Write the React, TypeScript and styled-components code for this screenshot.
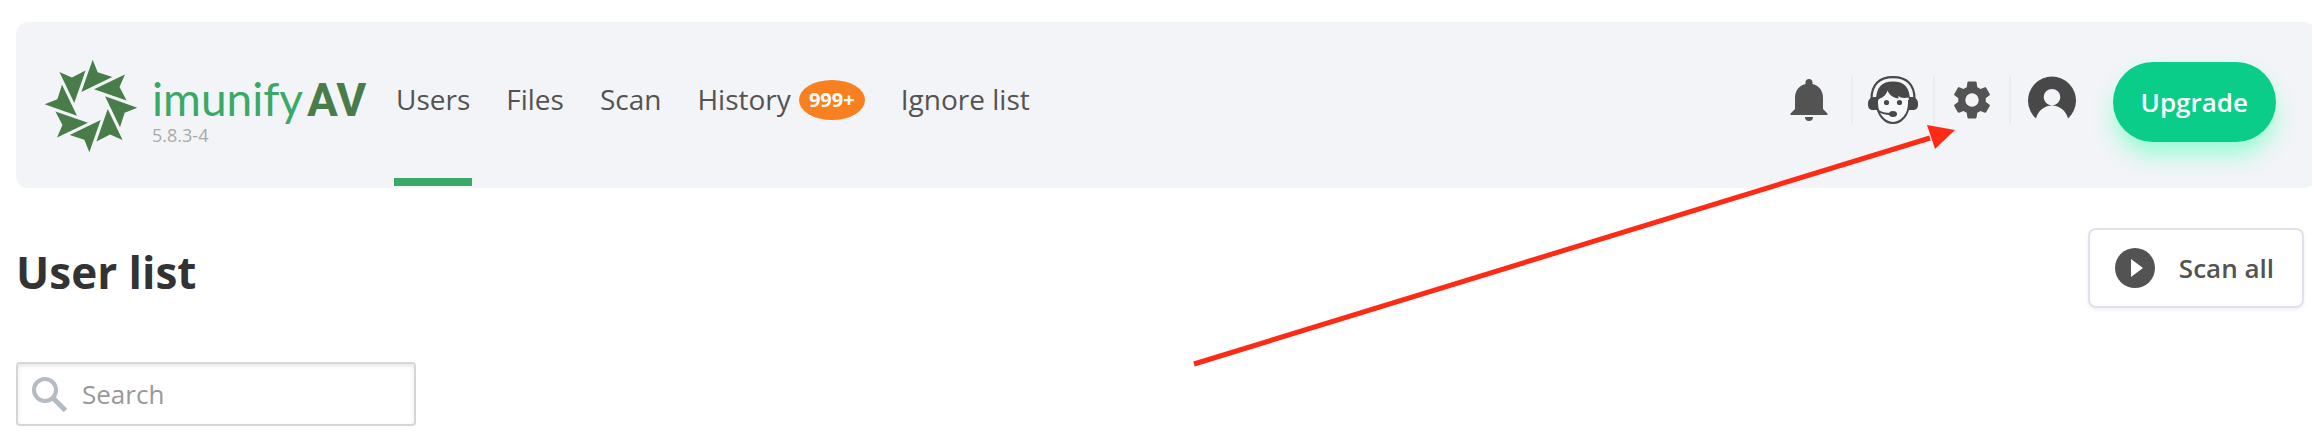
import React from "react";
import styled, { createGlobalStyle } from "styled-components";

const GlobalStyle = createGlobalStyle`
  *, *::before, *::after { box-sizing: border-box; }
  body {
    margin: 0;
    background: #fff;
    color: #535353;
    font-family: "Open Sans", sans-serif;
    font-size: 28px;
    overflow-x: hidden;
  }
  button, input { font: inherit; color: inherit; }
`;

const Page = styled.div`
  position: relative;
  padding: 22px 8px 20px 16px;
`;

const Header = styled.header`
  display: flex;
  align-items: stretch;
  height: 166px;
  margin-right: -12px;
  padding: 0 40px 0 28px;
  border-radius: 12px;
  background: #f3f4f7;
`;

const Brand = styled.a`
  display: flex;
  align-items: flex-start;
  gap: 14px;
  width: 350px;
  padding-top: 37px;
  color: #487d49;
  text-decoration: none;
`;

const BrandText = styled.span`
  display: flex;
  flex-direction: column;
  padding-top: 16px;
`;

const Wordmark = styled.span`
  display: flex;
  align-items: baseline;
  gap: 4px;
  height: 48px;
  line-height: 56px;
  white-space: nowrap;
`;

const Name = styled.span`
  color: #39a967;
  font-family: Lato, sans-serif;
  font-size: 46px;
  line-height: 48px;
`;

const Edition = styled.strong`
  font-family: Roboto, sans-serif;
  font-size: 46px;
  font-weight: 700;
  line-height: 48px;
`;

const Version = styled.span`
  color: #a9a9a9;
  font-size: 18px;
  line-height: 24px;
`;

const Nav = styled.nav`
  display: flex;
  gap: 32px;
`;

const NavLink = styled.a<{ $active?: boolean }>`
  display: flex;
  align-items: flex-start;
  gap: 8px;
  margin-bottom: 2px;
  padding: 58px 2px 0;
  border-bottom: 8px solid ${(p) => (p.$active ? "#39a967" : "transparent")};
  color: #535353;
  line-height: 38px;
  text-decoration: none;
  white-space: nowrap;
`;

const Badge = styled.span`
  width: 66px;
  height: 40px;
  border-radius: 50%;
  background: #f98020;
  color: #fff;
  font-size: 20px;
  font-weight: 700;
  line-height: 40px;
  text-align: center;
`;

const Actions = styled.div`
  display: flex;
  align-items: flex-start;
  margin-left: auto;
`;

const IconButton = styled.button<{ $width: number; $divided?: boolean }>`
  display: flex;
  align-items: center;
  justify-content: center;
  width: ${(p) => p.$width}px;
  height: 48px;
  margin-top: 54px;
  padding: 0;
  border: 0;
  border-left: ${(p) => (p.$divided ? "2px solid #ebecee" : "0")};
  background: none;
  cursor: pointer;
`;

const UpgradeButton = styled.button`
  height: 80px;
  margin: 40px 0 0 20px;
  padding: 0 28px;
  border: 0;
  border-radius: 40px;
  background: #0acd8a;
  box-shadow: 0 14px 24px -2px #93fcd3;
  color: #fff;
  font-size: 26px;
  font-weight: 600;
  cursor: pointer;
`;

const TitleRow = styled.div`
  display: flex;
  align-items: center;
  justify-content: space-between;
  margin-top: 40px;
`;

const Title = styled.h1`
  margin: 0;
  padding-top: 8px;
  color: #333;
  font-size: 44px;
  font-weight: 700;
  line-height: 60px;
`;

const ScanButton = styled.button`
  display: flex;
  align-items: center;
  gap: 24px;
  height: 80px;
  padding: 0 28px 0 25px;
  border: 2px solid #dfe2ee;
  border-radius: 8px;
  background: #fff;
  box-shadow: 0 2px 4px rgba(0, 0, 0, 0.06);
  font-size: 26px;
  font-weight: 600;
  cursor: pointer;
`;

const SearchBox = styled.label`
  display: flex;
  align-items: center;
  gap: 14px;
  width: 400px;
  max-width: 100%;
  height: 64px;
  margin-top: 54px;
  padding: 0 14px;
  border: 2px solid #d6d6d6;
  border-radius: 4px;
  background: #fff;
  box-shadow: inset 0 2px 4px rgba(0, 0, 0, 0.1);
`;

const SearchInput = styled.input`
  flex: 1;
  min-width: 0;
  padding: 0;
  border: 0;
  outline: 0;
  background: none;
  font-size: 26px;
  &::placeholder { color: #999; opacity: 1; }
`;

const Pointer = styled.svg`
  position: absolute;
  top: 120px;
  right: 356px;
  pointer-events: none;
`;

const Blades = () => (
  <svg width="94" height="94" viewBox="-141 -141 282 282" fill="#487d49" aria-hidden="true">
    {[0, 45, 90, 135, 180, 225, 270, 315].map((a) => (
      <path key={a} d="M5-139 20-101 64-87-29-42Z" transform={`rotate(${a})`} />
    ))}
  </svg>
);

const BellIcon = () => (
  <svg width="38" height="42" viewBox="0 0 38 42" fill="#535353" aria-hidden="true">
    <path d="M19 0a3.5 3.5 0 0 1 3.5 3.5v1.6C29 6.500 33 12 33 19v11l4.500 4.500V36H.5v-1.500L5 30V19C5 12 9 6.500 15.500 5.100V3.500A3.500 3.500 0 0 1 19 0ZM15 38h8a4 4 0 0 1-8 0Z" />
  </svg>
);

const SupportIcon = () => (
  <svg width="50" height="48" viewBox="0 0 50 48" aria-hidden="true">
    <path d="M9 22v5c0 12 8 20 16 20s16-8 16-20v-5L25 12Z" fill="#f7f8fa" />
    <path d="M9 24v3c0 12 8 20 16 20s16-8 16-20v-3" fill="none" stroke="#484848" strokeWidth="2" />
    <path d="M3.500 23C3.500 9 11 1.200 25 1.200s21.500 7.800 21.500 21.800" fill="none" stroke="#484848" strokeWidth="2.200" />
    <path d="M8 25C8 11 14 5.500 25 5.500S42 11 42 25c-1-1-1.500-2-1.500-3.500-4 1-8 .5-10.500-1.500l.8 2.500c-5-.5-9.800-3.500-11.300-8-1 4-4.500 7-7.500 8-1.500.5-1.500 1.500-2 2.500Z" fill="#484848" />
    <path d="M9 21v13H5c-3 0-5-2-5-5v-2c0-3 2-5 5-6Zm32 0v13h4c3 0 5-2 5-5v-2c0-3-2-5-5-6Z" fill="#484848" />
    <circle cx="18.500" cy="26.500" r="2.600" fill="#484848" />
    <circle cx="31.500" cy="26.500" r="2.600" fill="#484848" />
    <path d="M10 34.500c3 2.500 7 3.500 13 3.500" fill="none" stroke="#484848" strokeWidth="1.800" />
    <ellipse cx="25" cy="38" rx="4" ry="3" fill="#484848" />
  </svg>
);

const GearIcon = () => (
  <svg width="46" height="46" viewBox="0 0 24 24" fill="#535353" aria-hidden="true">
    <path d="M19.140 12.940c.04-.3.060-.61.060-.94 0-.32-.02-.64-.07-.94l2.030-1.580c.18-.14.23-.41.120-.61l-1.920-3.320c-.12-.22-.37-.29-.59-.22l-2.390.96c-.5-.38-1.030-.7-1.620-.94l-.36-2.540c-.04-.24-.24-.41-.48-.41h-3.840c-.24 0-.43.17-.47.41l-.36 2.540c-.59.24-1.130.57-1.620.94l-2.390-.96c-.22-.08-.47 0-.59.22L2.740 8.870c-.12.210-.08.470.12.610l2.030 1.580c-.05.3-.09.630-.09.940s.02.640.07.940l-2.030 1.580c-.18.140-.23.410-.12.610l1.920 3.320c.12.220.37.290.59.220l2.390-.96c.5.380 1.030.7 1.620.94l.36 2.540c.05.240.24.410.48.410h3.840c.24 0 .44-.17.470-.41l.36-2.540c.59-.24 1.130-.56 1.620-.94l2.390.96c.22.080.47 0 .59-.22l1.920-3.320c.12-.22.070-.47-.12-.61l-2.010-1.580ZM12 15.500A3.500 3.500 0 1 1 12 8.500a3.500 3.500 0 0 1 0 7Z" />
  </svg>
);

const UserIcon = () => (
  <svg width="48" height="48" viewBox="0 -1 48 48" fill="#484848" aria-hidden="true">
    <path fillRule="evenodd" d="M8 41.500A24 24 0 1 1 40 41.500C38 34 32 28.500 24 28.500S10 34 8 41.500ZM24 28.500a8.300 8.300 0 1 0 0-16.600 8.300 8.300 0 0 0 0 16.600Z" />
  </svg>
);

const PlayIcon = () => (
  <svg width="40" height="40" viewBox="0 0 40 40" aria-hidden="true">
    <circle cx="20" cy="20" r="20" fill="#535353" />
    <path d="M16 11v18l12-9Z" fill="#fff" />
  </svg>
);

const SearchIcon = () => (
  <svg width="36" height="36" viewBox="0 0 36 36" fill="none" stroke="#b4bbc3" strokeWidth="4" aria-hidden="true">
    <circle cx="13" cy="14" r="11" />
    <path d="m21.500 22.500 12 12" strokeWidth="5" />
  </svg>
);

export default function App() {
  return (
    <>
      <GlobalStyle />
      <Page>
        <Header>
          <Brand href="#home">
            <Blades />
            <BrandText>
              <Wordmark><Name>imunify</Name><Edition>AV</Edition></Wordmark>
              <Version>5.8.3-4</Version>
            </BrandText>
          </Brand>
          <Nav>
            <NavLink href="#users" $active>Users</NavLink>
            <NavLink href="#files">Files</NavLink>
            <NavLink href="#scan">Scan</NavLink>
            <NavLink href="#history">History<Badge>999+</Badge></NavLink>
            <NavLink href="#ignore">Ignore list</NavLink>
          </Nav>
          <Actions>
            <IconButton $width={84} aria-label="Notifications"><BellIcon /></IconButton>
            <IconButton $width={82} $divided aria-label="Support"><SupportIcon /></IconButton>
            <IconButton $width={76} $divided aria-label="Settings"><GearIcon /></IconButton>
            <IconButton $width={84} $divided aria-label="Account"><UserIcon /></IconButton>
            <UpgradeButton>Upgrade</UpgradeButton>
          </Actions>
        </Header>
        <main>
          <TitleRow>
            <Title>User list</Title>
            <ScanButton><PlayIcon />Scan all</ScanButton>
          </TitleRow>
          <SearchBox>
            <SearchIcon />
            <SearchInput type="search" placeholder="Search" aria-label="Search" />
          </SearchBox>
        </main>
        <Pointer width="764" height="250" viewBox="0 0 764 250" fill="#fd2b16" aria-hidden="true">
          <path d="M2 244 738 18" stroke="#fd2b16" strokeWidth="5" />
          <path d="M763 10 735 5 743 29Z" />
        </Pointer>
      </Page>
    </>
  );
}
